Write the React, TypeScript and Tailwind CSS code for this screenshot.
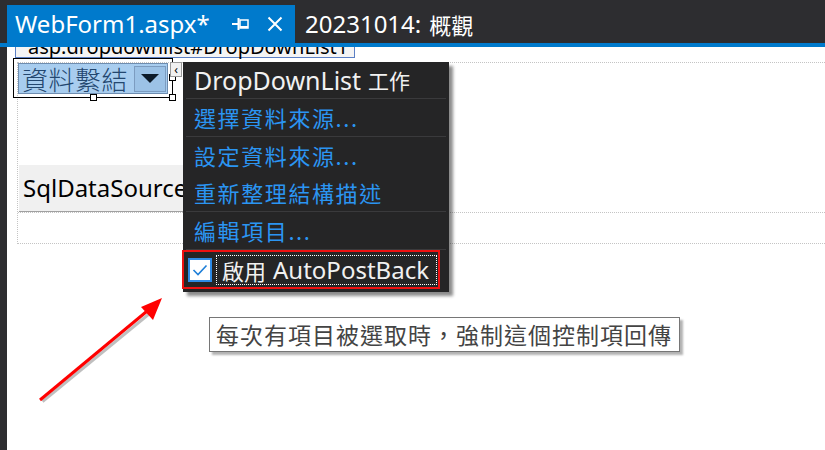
const latin = "font-['Noto_Sans','Noto_Sans_CJK_TC',sans-serif]";
const cjk = "font-['Noto_Sans_CJK_TC','Noto_Sans',sans-serif]";

const tasks = [
  { label: "選擇資料來源...", sepAfter: true },
  { label: "設定資料來源...", sepAfter: false },
  { label: "重新整理結構描述", sepAfter: true },
  { label: "編輯項目...", sepAfter: true },
];

function PinIcon() {
  return (
    <svg width="18" height="14" viewBox="0 0 18 14" aria-hidden>
      <path d="M0 7 H6" stroke="#fff" strokeWidth="2" />
      <path d="M6.5 1 V13" stroke="#fff" strokeWidth="2" />
      <rect x="8" y="3" width="8" height="8" fill="none" stroke="#fff" strokeWidth="1.5" />
      <path d="M8 10 H16" stroke="#fff" strokeWidth="2" />
    </svg>
  );
}

function CloseIcon() {
  return (
    <svg width="16" height="16" viewBox="0 0 16 16" aria-hidden>
      <path d="M1.5 1.5 L14.5 14.5 M14.5 1.5 L1.5 14.5" stroke="#fff" strokeWidth="2" />
    </svg>
  );
}

function Handle({ className }: { className: string }) {
  return <span className={`absolute h-[7px] w-[7px] border border-black bg-white ${className}`} />;
}

function SmartTagPanel() {
  return (
    <div className="absolute left-[176px] top-[15px] flex h-[230px] w-[266px] flex-col bg-[#252526] shadow-[4px_4px_3px_rgba(0,0,0,0.45)]">
      <div className="flex h-[36px] items-center pl-[11px] text-[#f1f1f1]">
        <span className={`${latin} text-[25px] leading-none`}>DropDownList</span>
        <span className={`${cjk} ml-[7px] text-[21px] leading-none`}>工作</span>
      </div>
      <div className="mx-[3px] h-px bg-[#3a3a3c]" />
      {tasks.map((t) => (
        <div key={t.label}>
          <div className={`${cjk} flex h-[37px] items-center pl-[11px] text-[22px] tracking-[1.6px] text-[#2b95f2]`}>
            {t.label}
          </div>
          {t.sepAfter && <div className="mx-[3px] h-px bg-[#3a3a3c]" />}
        </div>
      ))}
      <div className="-ml-px flex h-[39px] w-[258px] items-center gap-[4px] border-2 border-[#ee1111] pl-[4px]">
        <span className="flex h-[24px] w-[24px] items-center justify-center border-2 border-[#2e8ae6] bg-white">
          <svg width="16" height="12" viewBox="0 0 16 12" aria-hidden>
            <path d="M1.5 6 L6 10.5 L14.5 1.5" stroke="#1e7fd8" strokeWidth="1.6" fill="none" />
          </svg>
        </span>
        <span className="flex h-[30px] w-[221px] items-center border border-dotted border-white pl-[5px] text-[#f1f1f1]">
          <span className={`${cjk} text-[22px] leading-none`}>啟用</span>
          <span className={`${latin} ml-[7px] text-[24px] leading-none`}>AutoPostBack</span>
        </span>
      </div>
    </div>
  );
}

export default function App() {
  return (
    <div className="flex h-[450px] w-[825px] flex-col overflow-hidden bg-[#2d2d30]">
      {/* document tabs */}
      <div className="flex h-[43px] items-end pl-[7px]">
        <div className="flex h-[38px] w-[288px] items-center bg-[#007acc] pl-[8px] text-white">
          <span className={`${latin} text-[24px] leading-none`}>WebForm1.aspx*</span>
          <span className="ml-[22px]"><PinIcon /></span>
          <span className="ml-[17px]"><CloseIcon /></span>
        </div>
        <div className="flex h-[38px] items-center pl-[10px] text-white">
          <span className={`${latin} text-[24px] leading-none`}>20231014:</span>
          <span className={`${cjk} ml-[8px] text-[22px] leading-none`}>概觀</span>
        </div>
      </div>
      <div className="h-[4px] bg-[#007acc]" />

      <div className="flex flex-1">
        <div className="w-[7px]" />
        {/* design surface */}
        <div className="relative flex-1 overflow-hidden bg-white">
          <div className="relative z-0 -mt-[11px] ml-[8px] flex h-[22px] w-[340px] items-center border border-[#5b7fc4] bg-[#f4f4f4] pl-[12px]">
            <span className={`${latin} text-[20px] leading-none text-black`}>asp:dropdownlist#DropDownList1</span>
          </div>

          <div className="ml-[10px] mt-[4px] h-[182px] border-y border-l border-dotted border-[#c4c4c4]">
            <div className="relative z-10 -ml-[5px] -mt-[5px] h-[40px] w-[160px] border border-black p-[4px]">
              <div className="flex h-[31px] items-center border border-[#6e8db0] bg-[#a8cdef] pl-[3px]">
                <span className={`${cjk} flex-1 text-[26px] font-light leading-none tracking-[0.5px] text-[#23476f]`}>資料繫結</span>
                <span className="mr-px flex h-[26px] w-[32px] items-center justify-center border border-[#7c9cc0] bg-[#9cc2e6]">
                  <svg width="18" height="9" viewBox="0 0 18 9" aria-hidden>
                    <path d="M0 0 H18 L9 9 Z" fill="#0d1b2a" />
                  </svg>
                </span>
              </div>
              <Handle className="-bottom-[4px] left-[76px]" />
              <Handle className="-bottom-[4px] -right-[4px]" />
              <Handle className="-right-[4px] top-[15px]" />
            </div>

            <div className="ml-px mt-[67px] flex h-[47px] w-[260px] items-center border-b border-[#a0a0a0] bg-[#f0f0f0] pl-[4px]">
              <span className={`${latin} text-[24px] leading-none text-black`}>SqlDataSource</span>
            </div>
            <div className="h-[29px] border-t border-dotted border-[#c4c4c4]" />
          </div>

          {/* smart tag glyph */}
          <div className="absolute left-[163px] top-[15px] z-20 flex h-[15px] w-[12px] items-center justify-center border border-[#9a9a9a] bg-[#f0f0f0] text-[12px] leading-none text-black">
            ‹
          </div>

          <SmartTagPanel />

          {/* tooltip */}
          <div className="absolute left-[202px] top-[270px] flex h-[35px] w-[471px] items-center border border-[#767676] bg-white pl-[6px] shadow-[3px_3px_2px_rgba(0,0,0,0.3)]">
            <span className={`${cjk} text-[23px] leading-none tracking-[1px] text-[#444]`}>每次有項目被選取時，強制這個控制項回傳</span>
          </div>

          {/* annotation arrow */}
          <svg className="absolute left-[28px] top-[248px]" width="140" height="115" viewBox="0 0 140 115" aria-hidden>
            <path d="M6 105 L118 13" stroke="rgba(0,0,0,0.25)" strokeWidth="3" transform="translate(1.5 1.5)" />
            <path d="M5 105 L117 12" stroke="#ff0000" strokeWidth="3" />
            <path d="M127 3 L106 12 L118 25 Z" fill="#ff0000" />
          </svg>
        </div>
      </div>
    </div>
  );
}
